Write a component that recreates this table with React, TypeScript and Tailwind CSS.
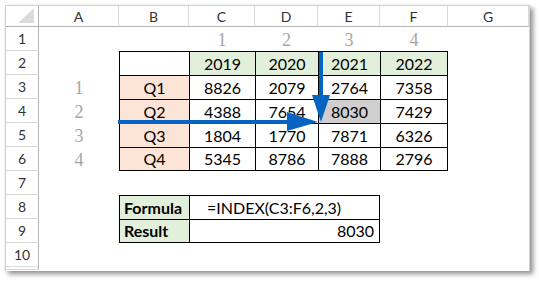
import React from 'react';

// Column widths: row header, A..G
const GRID =
  'grid grid-cols-[33px_80px_70px_66px_63px_62px_68px_81px] grid-rows-[21px_repeat(10,24px)_3px]';

const COLS = ['A', 'B', 'C', 'D', 'E', 'F', 'G'];

const years = ['2019', '2020', '2021', '2022'];
const quarters = [
  { q: 'Q1', vals: ['8826', '2079', '2764', '7358'] },
  { q: 'Q2', vals: ['4388', '7654', '8030', '7429'] },
  { q: 'Q3', vals: ['1804', '1770', '7871', '6326'] },
  { q: 'Q4', vals: ['5345', '8786', '7888', '2796'] },
];

const serif = "[font-family:'Liberation_Serif',serif] text-[18px] text-[#a6a6a6] pt-[2px]";
const cell = 'flex items-center justify-center whitespace-nowrap overflow-hidden';
const boxed = 'border-l border-t border-black';

const RowHead: React.FC<{ n?: number }> = ({ n }) => (
  <div className="flex items-center justify-center border-r border-b border-r-[#b4b4b4] border-b-[#dadada] text-[14px] text-[#333]">
    {n}
  </div>
);

const Blank: React.FC = () => <div />;

export default function App() {
  return (
    <div className="relative w-[539px] h-[281px] bg-white pt-[5px] pl-[5px] overflow-hidden">
      <div className="w-[525px] h-[266px] bg-white border-t border-l border-r border-[#d0d0d0] shadow-[3px_3px_5px_rgba(0,0,0,0.45)] [font-family:Lato,sans-serif] text-[16px] text-black">
        <div className={GRID}>
          {/* header row */}
          <div className="flex items-end justify-end pr-[3px] pb-[2px] border-r border-b border-r-[#b4b4b4] border-b-[#b4b4b4]">
            <svg width="17" height="16" viewBox="0 0 17 16">
              <polygon points="16,0 16,15 0,15" fill="#dcdcdc" />
            </svg>
          </div>
          {COLS.map((c) => (
            <div
              key={c}
              className="flex items-center justify-center border-r border-b border-r-[#dadada] border-b-[#b4b4b4] text-[14px] text-[#333]"
            >
              {c}
            </div>
          ))}

          {/* row 1: column index */}
          <RowHead n={1} />
          <Blank />
          <Blank />
          {['1', '2', '3', '4'].map((n) => (
            <div key={n} className={`${cell} ${serif}`}>
              {n}
            </div>
          ))}
          <Blank />

          {/* row 2: years */}
          <RowHead n={2} />
          <Blank />
          <div className={`${cell} ${boxed}`} />
          {years.map((y, i) => (
            <div
              key={y}
              className={`${cell} ${boxed} bg-[#e2efda] ${i === 3 ? 'border-r' : ''}`}
            >
              {y}
            </div>
          ))}
          <Blank />

          {/* rows 3-6: data */}
          {quarters.map((r, ri) => (
            <React.Fragment key={r.q}>
              <RowHead n={ri + 3} />
              <div className={`${cell} ${serif}`}>{ri + 1}</div>
              <div className={`${cell} ${boxed} bg-[#fce4d6] ${ri === 3 ? 'border-b' : ''}`}>
                {r.q}
              </div>
              {r.vals.map((v, ci) => (
                <div
                  key={ci}
                  className={`${cell} ${boxed} ${ri === 1 && ci === 2 ? 'bg-[#d0cece]' : ''} ${
                    ci === 3 ? 'border-r' : ''
                  } ${ri === 3 ? 'border-b' : ''}`}
                >
                  {v}
                </div>
              ))}
              <Blank />
            </React.Fragment>
          ))}

          {/* row 7 */}
          <RowHead n={7} />
          {COLS.map((c) => (
            <Blank key={c} />
          ))}

          {/* row 8: formula */}
          <RowHead n={8} />
          <Blank />
          <div className={`${cell} ${boxed} justify-start pl-[4px] bg-[#e2efda] font-bold`}>
            Formula
          </div>
          <div className={`${cell} ${boxed} col-span-3 border-r justify-start pl-[17px]`}>
            =INDEX(C3:F6,2,3)
          </div>
          <Blank />
          <Blank />

          {/* row 9: result */}
          <RowHead n={9} />
          <Blank />
          <div className={`${cell} ${boxed} border-b justify-start pl-[4px] bg-[#e2efda] font-bold`}>
            Result
          </div>
          <div className={`${cell} ${boxed} col-span-3 border-r border-b justify-end pr-[5px]`}>
            8030
          </div>
          <Blank />
          <Blank />

          {/* row 10 + partial row */}
          <RowHead n={10} />
          {COLS.map((c) => (
            <Blank key={c} />
          ))}
          <RowHead />
          {COLS.map((c) => (
            <Blank key={c} />
          ))}
        </div>
      </div>

      {/* arrows pointing at E4 */}
      <svg
        className="absolute left-0 top-0 pointer-events-none"
        width="539"
        height="281"
        viewBox="0 0 539 281"
      >
        <rect x="319" y="52" width="4" height="45" fill="#0563c1" />
        <polygon points="312,95 330,95 321,122" fill="#0563c1" />
        <rect x="118" y="120" width="172" height="4" fill="#0563c1" />
        <polygon points="287,112 287,131 318,122" fill="#0563c1" />
      </svg>
    </div>
  );
}
